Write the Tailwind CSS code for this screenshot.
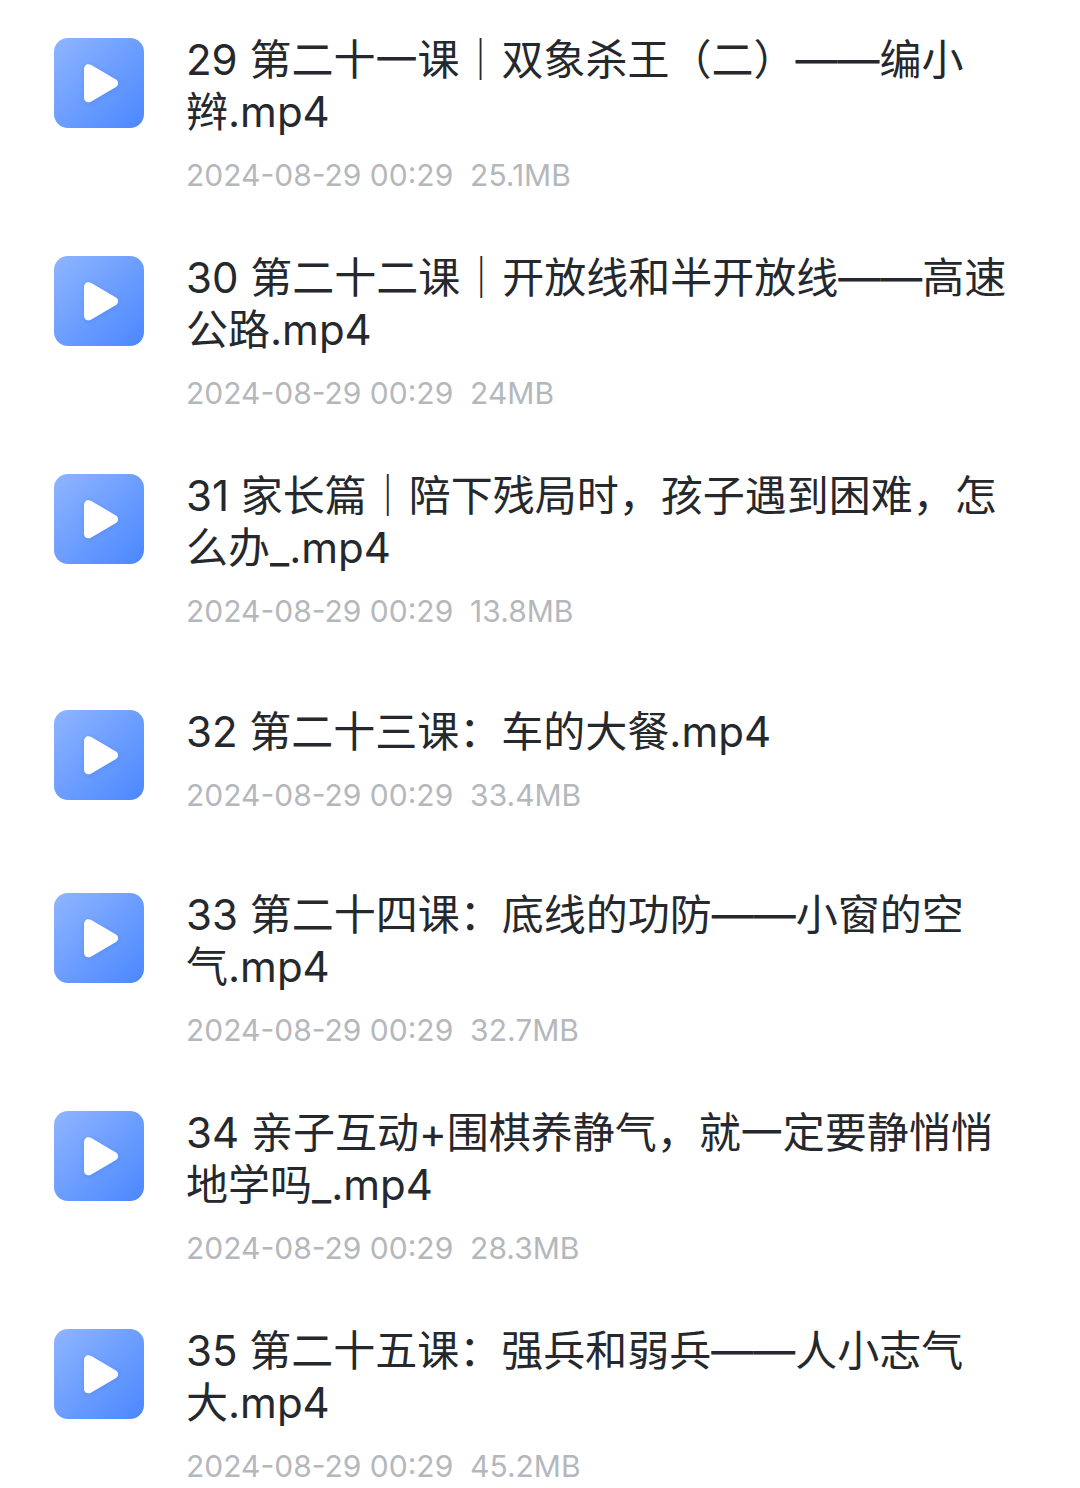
<!DOCTYPE html>
<html lang="zh-CN">
<head>
    <meta charset="UTF-8">
    <meta name="viewport" content="width=device-width, initial-scale=1.0">
    <title>课程视频</title>
    <script src="https://cdn.jsdelivr.net/npm/@tailwindcss/browser@4"></script>
</head>
<body class="bg-white font-['Inter','Noto_Sans_CJK_SC',sans-serif]">
    <!-- Shared play icon -->
    <svg class="size-0" aria-hidden="true">
        <defs>
            <linearGradient id="tile" x1="0" y1="0" x2="1" y2="1">
                <stop offset="0" stop-color="#8fb5ff"/>
                <stop offset="1" stop-color="#4a87ff"/>
            </linearGradient>
            <filter id="glow" x="-30%" y="-30%" width="160%" height="160%">
                <feDropShadow dx="0" dy="1" stdDeviation="2" flood-color="#2f6de8" flood-opacity="0.35"/>
            </filter>
        </defs>
        <symbol id="video" viewBox="0 0 90 90">
            <rect width="90" height="90" rx="14" fill="url(#tile)"/>
            <path d="M30 31.500C30 27 33.500 24.800 37.200 27L61.500 41.200C65 43.300 65 47.200 61.500 49.300L37.200 63.400C33.500 65.500 30 63.500 30 59.500Z" fill="#fff" filter="url(#glow)"/>
        </symbol>
    </svg>

    <!-- File list -->
    <ul class="pt-1 text-[#25282c]">
        <li class="flex items-center min-h-[201px] px-[54px] pt-[30px] pb-[29px]">
            <div class="flex items-start gap-[42px] w-full">
                <svg class="size-[90px] mt-1 shrink-0"><use href="#video"/></svg>
                <div class="flex-1 min-w-0">
                    <h2 class="text-[42px] leading-[52px]">29 第二十一课｜双象杀王（二）——编小辫.mp4</h2>
                    <p class="mt-[19px] text-[30px] leading-[36px] text-[#b4b8bd] whitespace-pre">2024-08-29 00:29  25.1MB</p>
                </div>
            </div>
        </li>
        <li class="flex items-center min-h-[201px] px-[54px] pt-[30px] pb-[29px]">
            <div class="flex items-start gap-[42px] w-full">
                <svg class="size-[90px] mt-1 shrink-0"><use href="#video"/></svg>
                <div class="flex-1 min-w-0">
                    <h2 class="text-[42px] leading-[52px]">30 第二十二课｜开放线和半开放线——高速公路.mp4</h2>
                    <p class="mt-[19px] text-[30px] leading-[36px] text-[#b4b8bd] whitespace-pre">2024-08-29 00:29  24MB</p>
                </div>
            </div>
        </li>
        <li class="flex items-center min-h-[201px] px-[54px] pt-[30px] pb-[29px]">
            <div class="flex items-start gap-[42px] w-full">
                <svg class="size-[90px] mt-1 shrink-0"><use href="#video"/></svg>
                <div class="flex-1 min-w-0">
                    <h2 class="text-[42px] leading-[52px]">31 家长篇｜陪下残局时，孩子遇到困难，怎么办_.mp4</h2>
                    <p class="mt-[19px] text-[30px] leading-[36px] text-[#b4b8bd] whitespace-pre">2024-08-29 00:29  13.8MB</p>
                </div>
            </div>
        </li>
        <li class="flex items-center min-h-[201px] px-[54px] pt-[30px] pb-[29px]">
            <div class="flex items-start gap-[42px] w-full">
                <svg class="size-[90px] mt-1 shrink-0"><use href="#video"/></svg>
                <div class="flex-1 min-w-0">
                    <h2 class="text-[42px] leading-[52px]">32 第二十三课：车的大餐.mp4</h2>
                    <p class="mt-[19px] text-[30px] leading-[36px] text-[#b4b8bd] whitespace-pre">2024-08-29 00:29  33.4MB</p>
                </div>
            </div>
        </li>
        <li class="flex items-center min-h-[201px] px-[54px] pt-[30px] pb-[29px]">
            <div class="flex items-start gap-[42px] w-full">
                <svg class="size-[90px] mt-1 shrink-0"><use href="#video"/></svg>
                <div class="flex-1 min-w-0">
                    <h2 class="text-[42px] leading-[52px]">33 第二十四课：底线的功防——小窗的空气.mp4</h2>
                    <p class="mt-[19px] text-[30px] leading-[36px] text-[#b4b8bd] whitespace-pre">2024-08-29 00:29  32.7MB</p>
                </div>
            </div>
        </li>
        <li class="flex items-center min-h-[201px] px-[54px] pt-[30px] pb-[29px]">
            <div class="flex items-start gap-[42px] w-full">
                <svg class="size-[90px] mt-1 shrink-0"><use href="#video"/></svg>
                <div class="flex-1 min-w-0">
                    <h2 class="text-[42px] leading-[52px]">34 亲子互动+围棋养静气，就一定要静悄悄地学吗_.mp4</h2>
                    <p class="mt-[19px] text-[30px] leading-[36px] text-[#b4b8bd] whitespace-pre">2024-08-29 00:29  28.3MB</p>
                </div>
            </div>
        </li>
        <li class="flex items-center px-[54px] pt-[30px] pb-1">
            <div class="flex items-start gap-[42px] w-full">
                <svg class="size-[90px] mt-1 shrink-0"><use href="#video"/></svg>
                <div class="flex-1 min-w-0">
                    <h2 class="text-[42px] leading-[52px]">35 第二十五课：强兵和弱兵——人小志气大.mp4</h2>
                    <p class="mt-[19px] text-[30px] leading-[36px] text-[#b4b8bd] whitespace-pre">2024-08-29 00:29  45.2MB</p>
                </div>
            </div>
        </li>
    </ul>
</body>
</html>
